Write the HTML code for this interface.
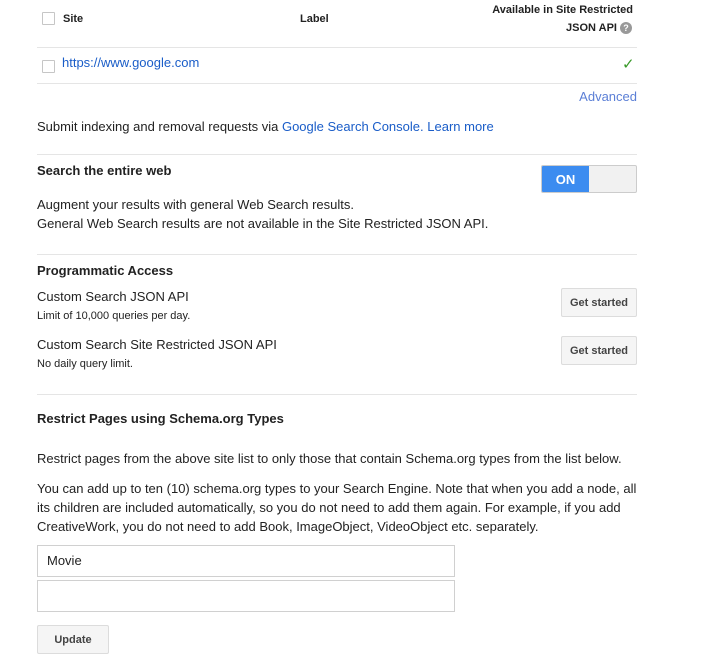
<!DOCTYPE html>
<html><head><style>
body{margin:0;width:701px;height:662px;background:#fff;font-family:"Liberation Sans",Arial,sans-serif;font-size:13px;color:#222;position:relative;overflow:hidden}
.a{position:absolute;white-space:nowrap;line-height:16px}
.b{font-weight:bold;font-size:11px}
.hr{position:absolute;left:37px;width:600px;height:1px;background:#e5e5e5}
.cb{position:absolute;width:11px;height:11px;border:1px solid #c6c6c6;border-radius:1px;background:#fff}
a,.l{color:#1a5dc8;text-decoration:none}
.btn{position:absolute;background:#f5f5f5;border:1px solid #dcdcdc;border-radius:2px;font-weight:bold;font-size:11px;color:#444;text-align:center;box-sizing:border-box}
.in{position:absolute;left:37px;width:418px;height:32px;border:1px solid #d0d0d0;box-sizing:border-box;padding-left:9px;line-height:30px}
</style></head><body>
<div class="cb" style="left:42px;top:12px"></div>
<div class="a b" style="left:63px;top:11px">Site</div>
<div class="a b" style="left:300px;top:11px">Label</div>
<div class="a b" style="right:68px;top:2px">Available in Site Restricted</div>
<div class="a b" style="right:84px;top:20px">JSON API</div>
<div style="position:absolute;left:620px;top:22px;width:12px;height:12px;border-radius:50%;background:#999;color:#fff;font-size:9px;font-weight:bold;text-align:center;line-height:12px">?</div>
<div class="hr" style="top:47px"></div>
<div class="cb" style="left:42px;top:60px"></div>
<div class="a l" style="left:62px;top:55px">https://www.google.com</div>
<div class="a" style="left:622px;top:57px;color:#3a9a2a;font-size:15px">✓</div>
<div class="hr" style="top:83px"></div>
<div class="a l" style="right:64px;top:89px;color:#5b7fd6">Advanced</div>
<div class="a" style="left:37px;top:119px">Submit indexing and removal requests via <span class="l">Google Search Console.</span> <span class="l">Learn more</span></div>
<div class="hr" style="top:154px"></div>
<div class="a" style="left:37px;top:163px;font-weight:bold">Search the entire web</div>
<div style="position:absolute;left:541px;top:165px;width:96px;height:28px;border:1px solid #ccc;box-sizing:border-box;background:#f1f1f1;border-radius:2px;overflow:hidden"><div style="width:47px;height:26px;background:#3c8cf0;color:#fff;font-weight:bold;text-align:center;line-height:28px;font-size:13px">ON</div></div>
<div class="a" style="left:37px;top:197px">Augment your results with general Web Search results.</div>
<div class="a" style="left:37px;top:216px">General Web Search results are not available in the Site Restricted JSON API.</div>
<div class="hr" style="top:254px"></div>
<div class="a" style="left:37px;top:263px;font-weight:bold">Programmatic Access</div>
<div class="a" style="left:37px;top:289px">Custom Search JSON API</div>
<div class="a" style="left:37px;top:308px;font-size:11px">Limit of 10,000 queries per day.</div>
<div class="btn" style="left:561px;top:288px;width:76px;height:29px;line-height:29px">Get started</div>
<div class="a" style="left:37px;top:337px">Custom Search Site Restricted JSON API</div>
<div class="a" style="left:37px;top:356px;font-size:11px">No daily query limit.</div>
<div class="btn" style="left:561px;top:336px;width:76px;height:29px;line-height:29px">Get started</div>
<div class="hr" style="top:394px"></div>
<div class="a" style="left:37px;top:411px;font-weight:bold">Restrict Pages using Schema.org Types</div>
<div class="a" style="left:37px;top:451px">Restrict pages from the above site list to only those that contain Schema.org types from the list below.</div>
<div class="a" style="left:37px;top:479px;line-height:19px;white-space:normal;width:605px">You can add up to ten (10) schema.org types to your Search Engine. Note that when you add a node, all its children are included automatically, so you do not need to add them again. For example, if you add CreativeWork, you do not need to add Book, ImageObject, VideoObject etc. separately.</div>
<div class="in" style="top:545px">Movie</div>
<div class="in" style="top:580px"></div>
<div class="btn" style="left:37px;top:625px;width:72px;height:29px;line-height:29px">Update</div>
</body></html>
